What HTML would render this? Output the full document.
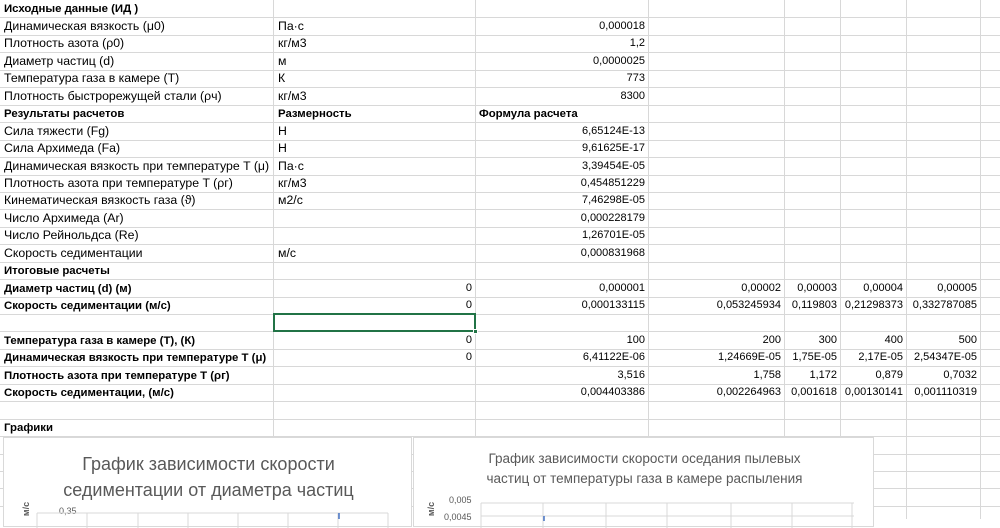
<!DOCTYPE html>
<html><head><meta charset="utf-8"><style>
*{margin:0;padding:0;box-sizing:border-box}
body{width:1000px;height:519px;overflow:hidden;background:#fff;position:relative;font-family:"Liberation Sans",sans-serif;font-size:12.3px;color:#000}
.h{position:absolute;left:0;width:1000px;height:1px;background:#d8d8d8}
.v{position:absolute;top:0;width:1px;height:519px;background:#d8d8d8}
.c{position:absolute;height:17px;line-height:17px;white-space:nowrap}
.l{padding-left:4px}
.r{text-align:right;padding-right:3px;font-size:11px}
b{font-weight:bold;font-size:11.4px}
.chart{position:absolute;background:#fff;border:1px solid #d9d9d9}
.t{position:absolute;color:#595959;white-space:nowrap;text-align:center;font-family:"Liberation Sans",sans-serif}
</style></head><body>
<div class="v" style="left:273px"></div><div class="v" style="left:475px"></div><div class="v" style="left:648px"></div><div class="v" style="left:784px"></div><div class="v" style="left:840px"></div><div class="v" style="left:906px"></div><div class="v" style="left:980px"></div>
<div class="h" style="top:17px"></div><div class="h" style="top:35px"></div><div class="h" style="top:52px"></div><div class="h" style="top:70px"></div><div class="h" style="top:87px"></div><div class="h" style="top:105px"></div><div class="h" style="top:122px"></div><div class="h" style="top:140px"></div><div class="h" style="top:157px"></div><div class="h" style="top:175px"></div><div class="h" style="top:192px"></div><div class="h" style="top:209px"></div><div class="h" style="top:227px"></div><div class="h" style="top:244px"></div><div class="h" style="top:262px"></div><div class="h" style="top:279px"></div><div class="h" style="top:297px"></div><div class="h" style="top:314px"></div><div class="h" style="top:331px"></div><div class="h" style="top:349px"></div><div class="h" style="top:366px"></div><div class="h" style="top:384px"></div><div class="h" style="top:401px"></div><div class="h" style="top:419px"></div><div class="h" style="top:436px"></div><div class="h" style="top:454px"></div><div class="h" style="top:471px"></div><div class="h" style="top:488px"></div><div class="h" style="top:506px"></div>

<div class="c l" style="top:0;left:0"><b>Исходные данные (ИД )</b></div>
<div class="c l" style="top:18px;left:0">Динамическая вязкость  (μ0)</div><div class="c l" style="top:18px;left:274px">Па·с</div><div class="c r" style="top:18px;left:475px;width:173px">0,000018</div>
<div class="c l" style="top:35px;left:0">Плотность азота (ρ0)</div><div class="c l" style="top:35px;left:274px">кг/м3</div><div class="c r" style="top:35px;left:475px;width:173px">1,2</div>
<div class="c l" style="top:53px;left:0">Диаметр частиц (d)</div><div class="c l" style="top:53px;left:274px">м</div><div class="c r" style="top:53px;left:475px;width:173px">0,0000025</div>
<div class="c l" style="top:70px;left:0">Температура газа в камере (T)</div><div class="c l" style="top:70px;left:274px">К</div><div class="c r" style="top:70px;left:475px;width:173px">773</div>
<div class="c l" style="top:88px;left:0">Плотность быстрорежущей стали (ρч)</div><div class="c l" style="top:88px;left:274px">кг/м3</div><div class="c r" style="top:88px;left:475px;width:173px">8300</div>
<div class="c l" style="top:105px;left:0"><b>Результаты расчетов</b></div><div class="c l" style="top:105px;left:274px"><b>Размерность</b></div><div class="c l" style="top:105px;left:475px"><b>Формула расчета</b></div>
<div class="c l" style="top:123px;left:0">Сила тяжести (Fg)</div><div class="c l" style="top:123px;left:274px">Н</div><div class="c r" style="top:123px;left:475px;width:173px">6,65124E-13</div>
<div class="c l" style="top:140px;left:0">Сила Архимеда (Fa)</div><div class="c l" style="top:140px;left:274px">Н</div><div class="c r" style="top:140px;left:475px;width:173px">9,61625E-17</div>
<div class="c l" style="top:158px;left:0">Динамическая вязкость при температуре T  (μ)</div><div class="c l" style="top:158px;left:274px">Па·с</div><div class="c r" style="top:158px;left:475px;width:173px">3,39454E-05</div>
<div class="c l" style="top:175px;left:0">Плотность азота при температуре T (ρг)</div><div class="c l" style="top:175px;left:274px">кг/м3</div><div class="c r" style="top:175px;left:475px;width:173px">0,454851229</div>
<div class="c l" style="top:192px;left:0">Кинематическая вязкость газа (ϑ)</div><div class="c l" style="top:192px;left:274px">м2/с</div><div class="c r" style="top:192px;left:475px;width:173px">7,46298E-05</div>
<div class="c l" style="top:210px;left:0">Число Архимеда (Ar)</div><div class="c r" style="top:210px;left:475px;width:173px">0,000228179</div>
<div class="c l" style="top:227px;left:0">Число Рейнольдса (Re)</div><div class="c r" style="top:227px;left:475px;width:173px">1,26701E-05</div>
<div class="c l" style="top:245px;left:0">Скорость седиментации</div><div class="c l" style="top:245px;left:274px">м/с</div><div class="c r" style="top:245px;left:475px;width:173px">0,000831968</div>
<div class="c l" style="top:262px;left:0"><b>Итоговые расчеты</b></div>
<div class="c l" style="top:280px;left:0"><b>Диаметр частиц (d) (м)</b></div><div class="c r" style="top:280px;left:274px;width:201px">0</div><div class="c r" style="top:280px;left:475px;width:173px">0,000001</div><div class="c r" style="top:280px;left:648px;width:136px">0,00002</div><div class="c r" style="top:280px;left:784px;width:56px">0,00003</div><div class="c r" style="top:280px;left:840px;width:66px">0,00004</div><div class="c r" style="top:280px;left:906px;width:74px">0,00005</div>
<div class="c l" style="top:297px;left:0"><b>Скорость седиментации (м/с)</b></div><div class="c r" style="top:297px;left:274px;width:201px">0</div><div class="c r" style="top:297px;left:475px;width:173px">0,000133115</div><div class="c r" style="top:297px;left:648px;width:136px">0,053245934</div><div class="c r" style="top:297px;left:784px;width:56px">0,119803</div><div class="c r" style="top:297px;left:840px;width:66px">0,21298373</div><div class="c r" style="top:297px;left:906px;width:74px">0,332787085</div>
<div style="position:absolute;left:273px;top:313px;width:203px;height:19px;border:2px solid #217346"></div>
<div style="position:absolute;left:473px;top:329px;width:5px;height:5px;background:#217346;border:1px solid #fff"></div>
<div class="c l" style="top:332px;left:0"><b>Температура газа в камере (T), (К)</b></div><div class="c r" style="top:332px;left:274px;width:201px">0</div><div class="c r" style="top:332px;left:475px;width:173px">100</div><div class="c r" style="top:332px;left:648px;width:136px">200</div><div class="c r" style="top:332px;left:784px;width:56px">300</div><div class="c r" style="top:332px;left:840px;width:66px">400</div><div class="c r" style="top:332px;left:906px;width:74px">500</div>
<div class="c l" style="top:349px;left:0"><b>Динамическая вязкость при температуре T  (μ)</b></div><div class="c r" style="top:349px;left:274px;width:201px">0</div><div class="c r" style="top:349px;left:475px;width:173px">6,41122E-06</div><div class="c r" style="top:349px;left:648px;width:136px">1,24669E-05</div><div class="c r" style="top:349px;left:784px;width:56px">1,75E-05</div><div class="c r" style="top:349px;left:840px;width:66px">2,17E-05</div><div class="c r" style="top:349px;left:906px;width:74px">2,54347E-05</div>
<div class="c l" style="top:367px;left:0"><b>Плотность азота при температуре T (ρг)</b></div><div class="c r" style="top:367px;left:475px;width:173px">3,516</div><div class="c r" style="top:367px;left:648px;width:136px">1,758</div><div class="c r" style="top:367px;left:784px;width:56px">1,172</div><div class="c r" style="top:367px;left:840px;width:66px">0,879</div><div class="c r" style="top:367px;left:906px;width:74px">0,7032</div>
<div class="c l" style="top:384px;left:0"><b>Скорость седиментации, (м/с)</b></div><div class="c r" style="top:384px;left:475px;width:173px">0,004403386</div><div class="c r" style="top:384px;left:648px;width:136px">0,002264963</div><div class="c r" style="top:384px;left:784px;width:56px">0,001618</div><div class="c r" style="top:384px;left:840px;width:66px">0,00130141</div><div class="c r" style="top:384px;left:906px;width:74px">0,001110319</div>
<div class="c l" style="top:419px;left:0"><b>Графики</b></div>

<div class="chart" style="left:3px;top:437px;width:409px;height:90px">
 <div class="t" style="left:0;width:409px;top:13px;font-size:18px;line-height:26px">График зависимости скорости<br>седиментации  от диаметра частиц</div>
 <div class="t" style="left:15px;top:66px;font-size:9px;transform:rotate(-90deg);font-weight:bold">м/с</div>
 <div class="t" style="left:55px;top:68px;font-size:9px">0,35</div>
 <svg style="position:absolute;left:0;top:0" width="409" height="90"><g stroke="#d9d9d9" fill="none"><path d="M33 75H384M33 75V90M83 75V90M134 75V90M184 75V90M234 75V90M284 75V90M334 75V90M384 75V90"/></g><path d="M335 75v6" stroke="#4472c4" stroke-width="1.5"/></svg>
</div>
<div class="chart" style="left:413px;top:437px;width:461px;height:90px">
 <div class="t" style="left:0;width:461px;top:11px;font-size:13.5px;line-height:20px">График зависимости скорости оседания пылевых<br>частиц от температуры газа в камере распыления</div>
 <div class="t" style="left:10px;top:66px;font-size:9px;transform:rotate(-90deg);font-weight:bold">м/с</div>
 <div class="t" style="left:35px;top:57px;font-size:9px">0,005</div>
 <div class="t" style="left:30px;top:74px;font-size:9px">0,0045</div>
 <svg style="position:absolute;left:0;top:0" width="461" height="90"><g stroke="#d9d9d9" fill="none"><path d="M67 65H440M67 78H440M67 65V90M129 65V90M192 65V90M253 65V90M317 65V90M378 65V90M438 65V90"/></g><path d="M130 78v5" stroke="#4472c4" stroke-width="1.5"/></svg>
</div>
</body></html>
